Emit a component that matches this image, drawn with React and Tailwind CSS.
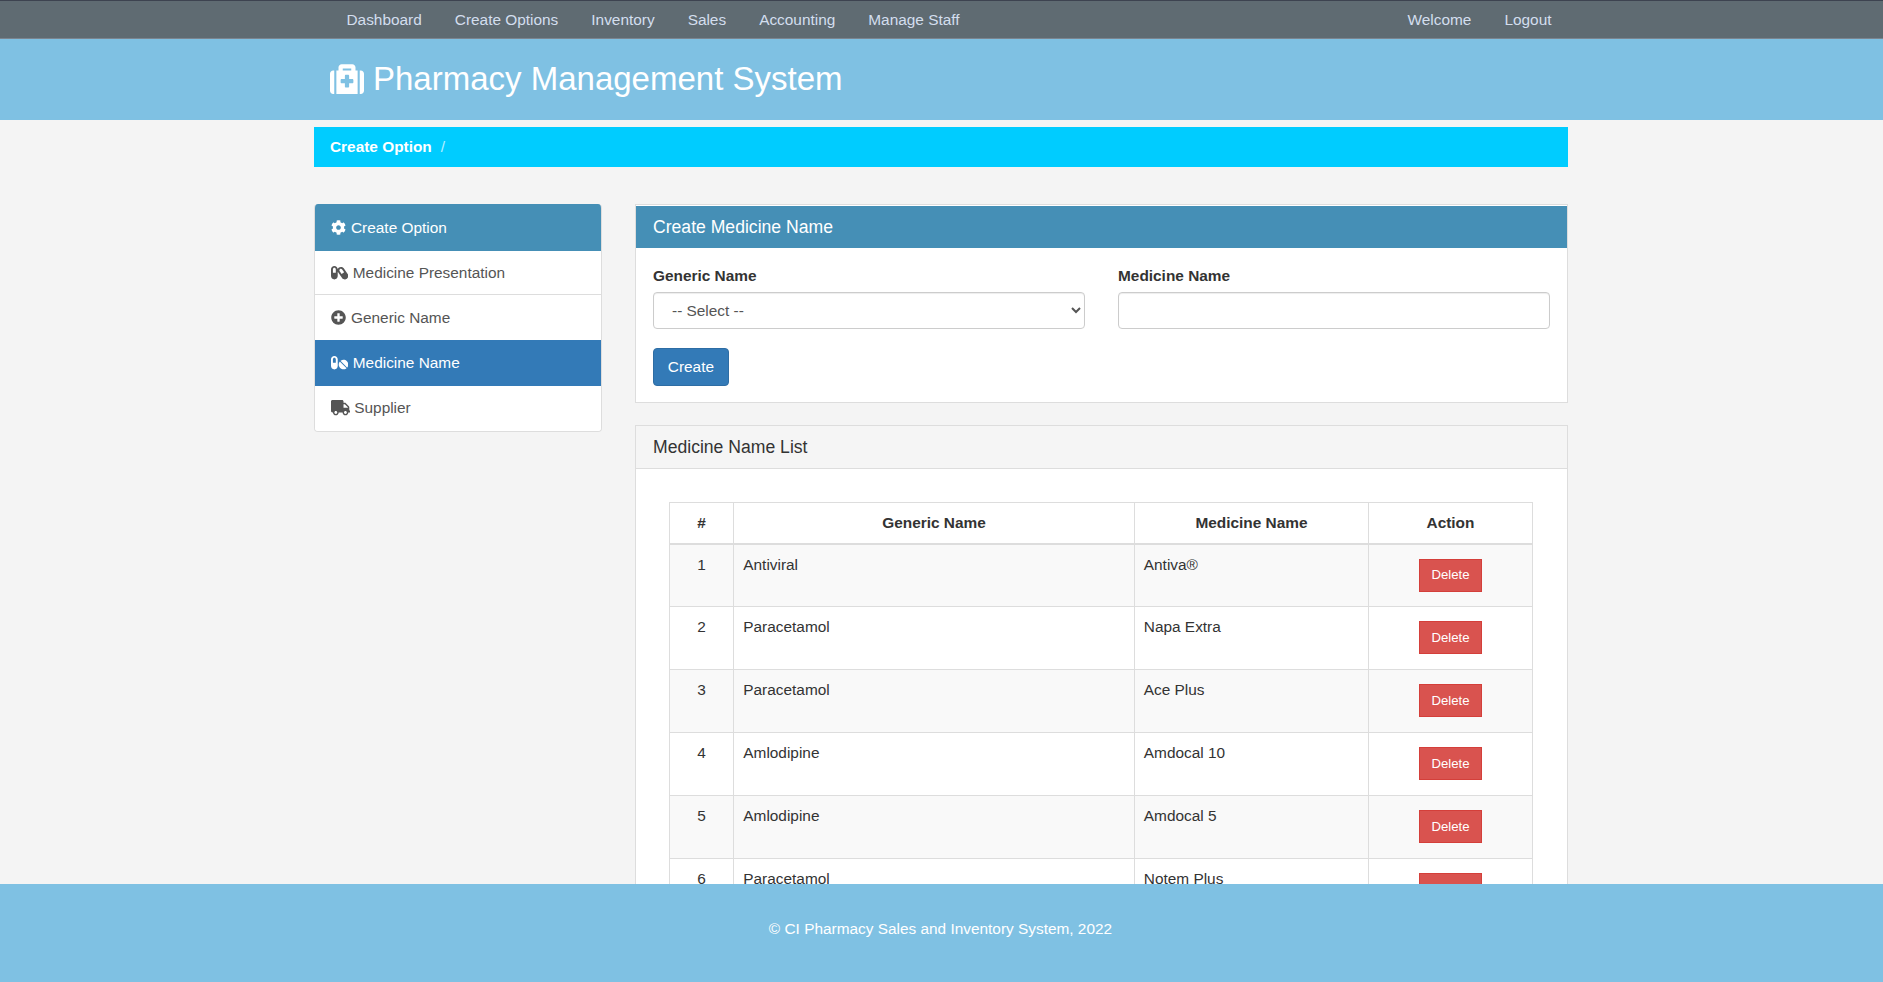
import {
  FaCapsules,
  FaCog,
  FaMedkit,
  FaPills,
  FaPlusCircle,
  FaTruck,
} from "react-icons/fa";

export default function App() {
  // Data
  const navLeft = ["Dashboard", "Create Options", "Inventory", "Sales", "Accounting", "Manage Staff"];
  const navRight = ["Welcome", "Logout"];
  const rows = [
    { id: 1, generic: "Antiviral", name: "Antiva®" },
    { id: 2, generic: "Paracetamol", name: "Napa Extra" },
    { id: 3, generic: "Paracetamol", name: "Ace Plus" },
    { id: 4, generic: "Amlodipine", name: "Amdocal 10" },
    { id: 5, generic: "Amlodipine", name: "Amdocal 5" },
    { id: 6, generic: "Paracetamol", name: "Notem Plus" },
  ];

  return (
    <div className="flex flex-col h-[982px] overflow-hidden bg-[#f4f4f4] text-[15.4px] leading-[22px] text-[#333] font-['Liberation_Sans',Arial,sans-serif]">
      {/* Top Nav */}
      <nav className="shrink-0 h-[39px] bg-[#5f6b72] border-t border-t-[#3d4350] border-b border-b-[#7b8590]">
        <div className="flex justify-between w-[1254px] h-full ml-[314px] pl-[16px] text-[#d3deee]">
          <div className="flex items-center">
            {navLeft.map((item) => (
              <a key={item} className="px-[16.5px]">
                {item}
              </a>
            ))}
          </div>
          <div className="flex items-center">
            {navRight.map((item) => (
              <a key={item} className="px-[16.5px]">
                {item}
              </a>
            ))}
          </div>
        </div>
      </nav>

      {/* Header */}
      <header className="shrink-0 h-[81px] bg-[#7fc1e3]">
        <div className="flex items-center gap-[9px] w-[1254px] h-full ml-[314px] pb-[2px] px-[16px] text-white">
          <FaMedkit size={34} />
          <h1 className="text-[33px] leading-none">Pharmacy Management System</h1>
        </div>
      </header>

      {/* Page */}
      <main className="flex-1 min-h-0 overflow-hidden">
        <div className="w-[1254px] ml-[314px]">
          {/* Breadcrumb */}
          <div className="flex items-center gap-[9px] h-[40px] mt-[7px] px-[16px] bg-[#00ccff] text-white">
            <strong>Create Option</strong>
            <span className="opacity-70">/</span>
          </div>

          <div className="flex gap-[33px] mt-[37px] items-start">
            {/* Sidebar */}
            <aside className="w-[288px] shrink-0 rounded-[4px] overflow-hidden border border-[#ddd] border-t-0">
              <div className="flex items-center gap-[5px] h-[47px] -mx-px px-[17px] bg-[#458fb6] text-white">
                <FaCog size={15} />
                Create Option
              </div>
              <div className="flex items-center gap-[4.5px] h-[44px] px-[16px] bg-white text-[#555] border-b border-[#ddd]">
                <FaCapsules size={17.3} />
                Medicine Presentation
              </div>
              <div className="flex items-center gap-[5px] h-[45px] px-[16px] bg-white text-[#555]">
                <FaPlusCircle size={15} />
                Generic Name
              </div>
              <div className="flex items-center gap-[4.5px] h-[46px] -mx-px px-[17px] bg-[#337ab7] text-white">
                <FaPills size={17.3} />
                Medicine Name
              </div>
              <div className="flex items-center gap-[4px] h-[45px] pb-[1px] px-[16px] bg-white text-[#555]">
                <FaTruck size={19.25} />
                Supplier
              </div>
            </aside>

            {/* Content */}
            <div className="flex-1 min-w-0">
              {/* Create Form */}
              <section className="bg-white border border-[#ddd] pt-px">
                <h2 className="flex items-center h-[42px] px-[17px] bg-[#458fb6] text-[17.6px] text-white">
                  Create Medicine Name
                </h2>
                <div className="px-[17px] py-[16.5px]">
                  <div className="grid grid-cols-2 gap-[33px]">
                    <div>
                      <label className="block mb-[5.5px] font-bold">Generic Name</label>
                      <select className="w-full h-[37.4px] px-[14px] bg-white border border-[#ccc] rounded-[4px] text-[#555] shadow-[inset_0_1px_1px_rgba(0,0,0,0.075)]">
                        <option>-- Select --</option>
                      </select>
                    </div>
                    <div>
                      <label className="block mb-[5.5px] font-bold">Medicine Name</label>
                      <input
                        type="text"
                        className="w-full h-[37.4px] px-[13px] bg-white border border-[#ccc] rounded-[4px] text-[#555] shadow-[inset_0_1px_1px_rgba(0,0,0,0.075)]"
                      />
                    </div>
                  </div>
                  <button className="block h-[37.4px] mt-[19px] px-[13.8px] bg-[#337ab7] border border-[#2e6da4] rounded-[4px] text-white">
                    Create
                  </button>
                </div>
              </section>

              {/* Medicine List */}
              <section className="mt-[22px] bg-white border border-[#ddd]">
                <h2 className="flex items-center h-[43px] px-[17px] bg-[#f5f5f5] border-b border-[#ddd] text-[17.6px] text-[#333]">
                  Medicine Name List
                </h2>
                <div className="pt-[33px] px-[33px]">
                  <table className="w-[863px] table-fixed border-collapse">
                    <colgroup>
                      <col className="w-[64px]" />
                      <col className="w-[401px]" />
                      <col className="w-[234px]" />
                      <col className="w-[164px]" />
                    </colgroup>
                    <thead>
                      <tr className="h-[41px]">
                        <th className="border border-[#ddd] border-b-2 align-middle font-bold">#</th>
                        <th className="border border-[#ddd] border-b-2 align-middle font-bold">Generic Name</th>
                        <th className="border border-[#ddd] border-b-2 align-middle font-bold">Medicine Name</th>
                        <th className="border border-[#ddd] border-b-2 align-middle font-bold">Action</th>
                      </tr>
                    </thead>
                    <tbody>
                      {rows.map((row, idx) => (
                        <tr key={row.id} className={idx % 2 == 0 ? "h-[63px] bg-[#f9f9f9]" : "h-[63px] bg-white"}>
                          <td className="border border-[#ddd] p-[8.8px] align-top text-center">{row.id}</td>
                          <td className="border border-[#ddd] p-[8.8px] pl-[9.3px] align-top">{row.generic}</td>
                          <td className="border border-[#ddd] p-[8.8px] align-top">{row.name}</td>
                          <td className="border border-[#ddd] p-[8.8px] align-top text-center">
                            <button className="w-[63px] h-[33px] mt-[5px] bg-[#d9534f] border border-[#d43f3a] text-[13.2px] leading-none text-white">
                              Delete
                            </button>
                          </td>
                        </tr>
                      ))}
                    </tbody>
                  </table>
                </div>
              </section>
            </div>
          </div>
        </div>
      </main>

      {/* Footer */}
      <footer className="shrink-0 flex justify-center items-center h-[98px] pb-[8px] pr-[2px] bg-[#7fc1e3] text-white">
        © CI Pharmacy Sales and Inventory System, 2022
      </footer>
    </div>
  );
}
